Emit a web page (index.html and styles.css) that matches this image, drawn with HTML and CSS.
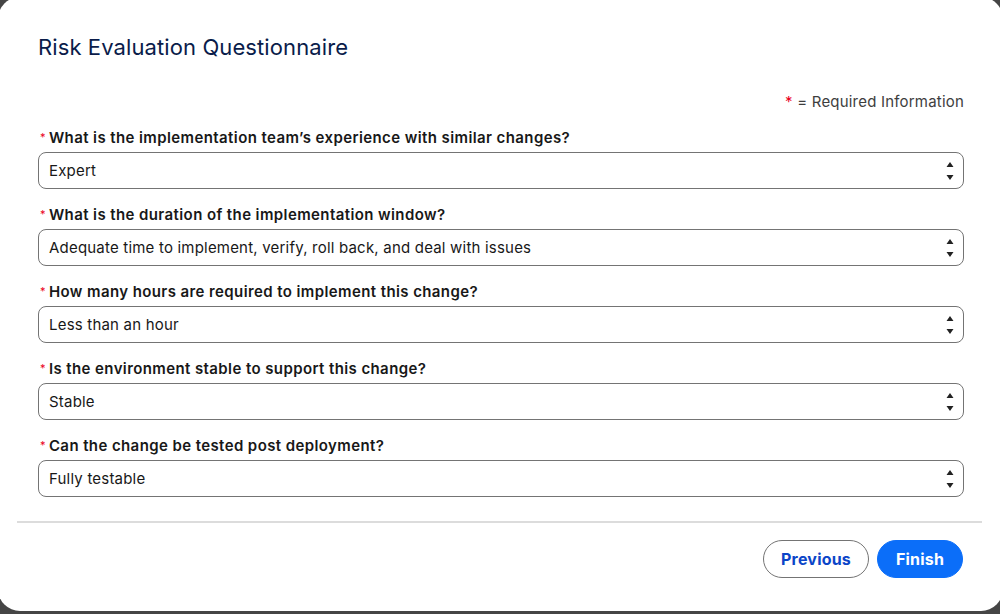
FILE: index.html
```html
<!DOCTYPE html>
<html lang="en">
<head>
  <meta charset="utf-8">
  <title>Risk Evaluation Questionnaire</title>
  <link rel="stylesheet" href="styles.css">
</head>
<body>
  <div class="modal">
    <div class="modal-body">
      <h1 class="title">Risk Evaluation Questionnaire</h1>
      <div class="legend"><span class="req">*</span> = Required Information</div>

      <div class="field">
        <label class="field-label"><span class="req">*</span>What is the implementation team’s experience with similar changes?</label>
        <div class="select">
          <span>Expert</span>
          <svg class="arrows" width="10" height="26" viewBox="0 0 10 26"><path d="M5 4 L8.5 9 H1.5 Z M5 22 L8.5 17 H1.5 Z" fill="#222"/></svg>
        </div>
      </div>

      <div class="field">
        <label class="field-label"><span class="req">*</span>What is the duration of the implementation window?</label>
        <div class="select">
          <span>Adequate time to implement, verify, roll back, and deal with issues</span>
          <svg class="arrows" width="10" height="26" viewBox="0 0 10 26"><path d="M5 4 L8.5 9 H1.5 Z M5 22 L8.5 17 H1.5 Z" fill="#222"/></svg>
        </div>
      </div>

      <div class="field">
        <label class="field-label"><span class="req">*</span>How many hours are required to implement this change?</label>
        <div class="select">
          <span>Less than an hour</span>
          <svg class="arrows" width="10" height="26" viewBox="0 0 10 26"><path d="M5 4 L8.5 9 H1.5 Z M5 22 L8.5 17 H1.5 Z" fill="#222"/></svg>
        </div>
      </div>

      <div class="field">
        <label class="field-label"><span class="req">*</span>Is the environment stable to support this change?</label>
        <div class="select">
          <span>Stable</span>
          <svg class="arrows" width="10" height="26" viewBox="0 0 10 26"><path d="M5 4 L8.5 9 H1.5 Z M5 22 L8.5 17 H1.5 Z" fill="#222"/></svg>
        </div>
      </div>

      <div class="field">
        <label class="field-label"><span class="req">*</span>Can the change be tested post deployment?</label>
        <div class="select">
          <span>Fully testable</span>
          <svg class="arrows" width="10" height="26" viewBox="0 0 10 26"><path d="M5 4 L8.5 9 H1.5 Z M5 22 L8.5 17 H1.5 Z" fill="#222"/></svg>
        </div>
      </div>
    </div>

    <div class="modal-footer">
      <button class="btn btn-outline">Previous</button>
      <button class="btn btn-brand">Finish</button>
    </div>
  </div>
</body>
</html>
```

FILE: styles.css
```css
:root {
  --backdrop: #454545;
  --text: #181818;
  --title: #0a1c4a;
  --border: #747474;
  --required: #ea001e;
  --brand: #0b6ef9;
  --link: #0b45c8;
}
* { box-sizing: border-box; }
body {
  margin: 0;
  background: var(--backdrop);
  font-family: Inter, "Noto Sans", "Liberation Sans", sans-serif;
  color: var(--text);
  overflow: hidden;
}
.modal {
  margin: -3px -3px 0 -2px;
  height: 614px;
  background: #fff;
  border-radius: 22px;
}
.modal-body {
  padding: 36px 39px 0 40px;
}
.title {
  margin: 0;
  font-size: 22px;
  line-height: 28px;
  font-weight: 400;
  color: var(--title);
  letter-spacing: 0.1px;
}
.legend {
  margin-top: 31px;
  text-align: right;
  font-size: 15px;
  line-height: 20px;
  color: #3e3e3e;
  letter-spacing: 0.2px;
}
.req {
  color: var(--required);
}
.field-label .req {
  font-size: 11px;
  font-weight: 400;
  line-height: 0;
  vertical-align: 2px;
  margin: 0 3px 0 2px;
}
.field { margin-top: 15px; }
.field-label {
  display: block;
  height: 20px;
  font-size: 15px;
  line-height: 21px;
  font-weight: 600;
  letter-spacing: 0.4px;
  margin-bottom: 5px;
}
.select {
  display: flex;
  align-items: center;
  justify-content: space-between;
  height: 37px;
  padding: 0 8px 0 10px;
  border: 1px solid var(--border);
  border-radius: 8px;
  font-size: 15px;
  letter-spacing: 0.2px;
}
.arrows { flex: none; }
.modal-footer {
  display: flex;
  justify-content: flex-end;
  gap: 8px;
  margin: 24px 21px 0 19px;
  padding: 17px 19px 0 0;
  border-top: 2px solid #dcdcdc;
}
.btn {
  height: 38px;
  border-radius: 19px;
  font-family: inherit;
  font-size: 16px;
  font-weight: 700;
  letter-spacing: 0.2px;
  cursor: pointer;
}
.btn-outline {
  width: 106px;
  background: #fff;
  border: 1px solid var(--border);
  color: var(--link);
}
.btn-brand {
  width: 86px;
  background: var(--brand);
  border: 1px solid var(--brand);
  color: #fff;
}
```
